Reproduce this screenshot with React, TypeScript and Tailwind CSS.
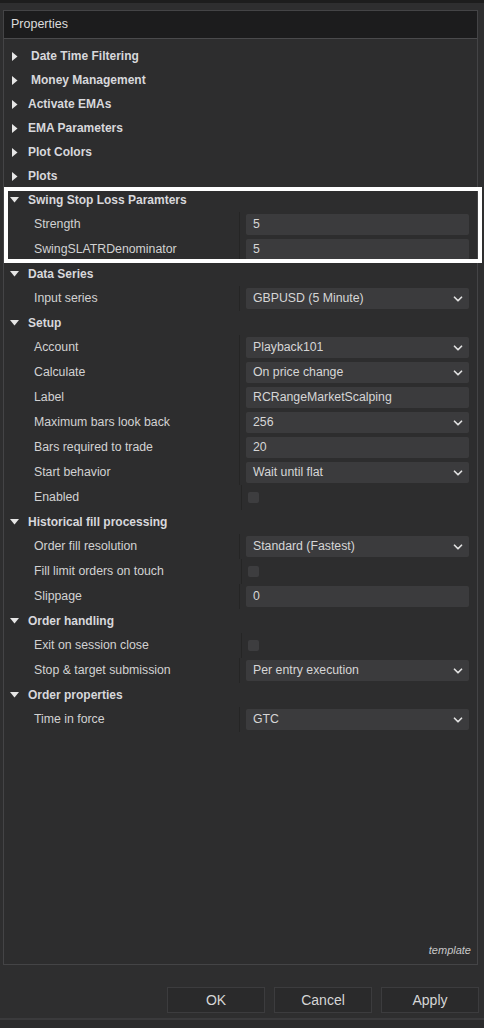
import { ChevronDown } from 'lucide-react';

type Prop = { label: string; value?: string; kind: 'text' | 'select' | 'check' };
type Cat = { name: string; open: boolean; pad?: boolean; props?: Prop[] };

const cats: Cat[] = [
  { name: 'Date Time Filtering', open: false, pad: true },
  { name: 'Money Management', open: false, pad: true },
  { name: 'Activate EMAs', open: false },
  { name: 'EMA Parameters', open: false },
  { name: 'Plot Colors', open: false },
  { name: 'Plots', open: false },
  {
    name: 'Swing Stop Loss Paramters',
    open: true,
    props: [
      { label: 'Strength', value: '5', kind: 'text' },
      { label: 'SwingSLATRDenominator', value: '5', kind: 'text' },
    ],
  },
  {
    name: 'Data Series',
    open: true,
    props: [{ label: 'Input series', value: 'GBPUSD (5 Minute)', kind: 'select' }],
  },
  {
    name: 'Setup',
    open: true,
    props: [
      { label: 'Account', value: 'Playback101', kind: 'select' },
      { label: 'Calculate', value: 'On price change', kind: 'select' },
      { label: 'Label', value: 'RCRangeMarketScalping', kind: 'text' },
      { label: 'Maximum bars look back', value: '256', kind: 'select' },
      { label: 'Bars required to trade', value: '20', kind: 'text' },
      { label: 'Start behavior', value: 'Wait until flat', kind: 'select' },
      { label: 'Enabled', kind: 'check' },
    ],
  },
  {
    name: 'Historical fill processing',
    open: true,
    props: [
      { label: 'Order fill resolution', value: 'Standard (Fastest)', kind: 'select' },
      { label: 'Fill limit orders on touch', kind: 'check' },
      { label: 'Slippage', value: '0', kind: 'text' },
    ],
  },
  {
    name: 'Order handling',
    open: true,
    props: [
      { label: 'Exit on session close', kind: 'check' },
      { label: 'Stop & target submission', value: 'Per entry execution', kind: 'select' },
    ],
  },
  {
    name: 'Order properties',
    open: true,
    props: [{ label: 'Time in force', value: 'GTC', kind: 'select' }],
  },
];

function Arrow({ open }: { open: boolean }) {
  return open ? (
    <svg width="9" height="6" viewBox="0 0 9 6" className="ml-[6px] mr-[9px]">
      <path d="M0 0 L9 0 L4.5 5.5 Z" fill="#e6e6e6" />
    </svg>
  ) : (
    <svg width="6" height="9" viewBox="0 0 6 9" className="ml-[8px] mr-[10px]">
      <path d="M0 0 L5.5 4.5 L0 9 Z" fill="#e6e6e6" />
    </svg>
  );
}

function PropRow({ p }: { p: Prop }) {
  return (
    <div className="flex h-[25px] items-center text-[12.3px]">
      <div className="w-[237px] pl-[30px] text-[#d2d2d2]">{p.label}</div>
      <div className="h-full w-px bg-[#252525]" />
      <div className="flex flex-1 items-center pl-[6px] pr-[8px]">
        {p.kind === 'check' ? (
          <div className="h-[11px] w-[11px] rounded-[2px] bg-[#3d3d3f]" />
        ) : (
          <div className="flex h-[21px] w-[223px] items-center justify-between rounded-[2px] bg-[#3b3b3d] pl-[7px] pr-[4px] text-[#d6d6d6]">
            <span>{p.value}</span>
            {p.kind === 'select' && (
              <ChevronDown className="h-[14px] w-[14px] text-[#e0e0e0]" strokeWidth={3} />
            )}
          </div>
        )}
      </div>
    </div>
  );
}

export default function App() {
  return (
    <div
      className="relative flex h-[1028px] w-[484px] flex-col bg-[#2e2e2f] text-[12.5px]"
      style={{ fontFamily: '"Liberation Sans", Arial, sans-serif' }}
    >
      <div className="h-[3px] bg-[#1d1d1d]" />
      <div className="ml-[3px] mr-[6px] mt-[7px] flex h-[955px] flex-col border border-[#444446] bg-[#2d2d2e]">
        <div className="flex h-[28px] items-center border-b border-[#4a4a4c] bg-[#1c1c1d] pl-[7px] text-[#dcdcdc]">
          Properties
        </div>
        <div className="mt-[5px] flex flex-col">
          {cats.map((c) => (
            <div key={c.name}>
              <div className="flex h-[24px] items-center">
                <Arrow open={c.open} />
                <span className={`text-[12px] font-bold text-[#d8d8dc] ${c.pad ? 'pl-[3px]' : ''}`}>{c.name}</span>
              </div>
              {c.props?.map((p) => <PropRow key={p.label} p={p} />)}
            </div>
          ))}
        </div>
        <div className="mt-auto flex justify-end pb-[6px] pr-[6px] text-[11px] italic text-[#c8c8c8]">
          template
        </div>
      </div>
      <div className="mt-[22px] flex justify-end gap-[9px] pr-[5px]">
        {['OK', 'Cancel', 'Apply'].map((b) => (
          <div
            key={b}
            className="flex h-[26px] w-[98px] items-center justify-center border border-[#3c3c3e] bg-[#2a2a2b] text-[14px] text-[#d6d6d6]"
          >
            {b}
          </div>
        ))}
      </div>
      <div className="mt-[5px] h-[2px] bg-[#3a3a3c]" />
      <div className="flex-1 bg-[#2b2b2c]" />
      <div className="pointer-events-none absolute left-[4px] top-[187px] h-[76px] w-[478px] border-[4px] border-white" />
    </div>
  );
}
